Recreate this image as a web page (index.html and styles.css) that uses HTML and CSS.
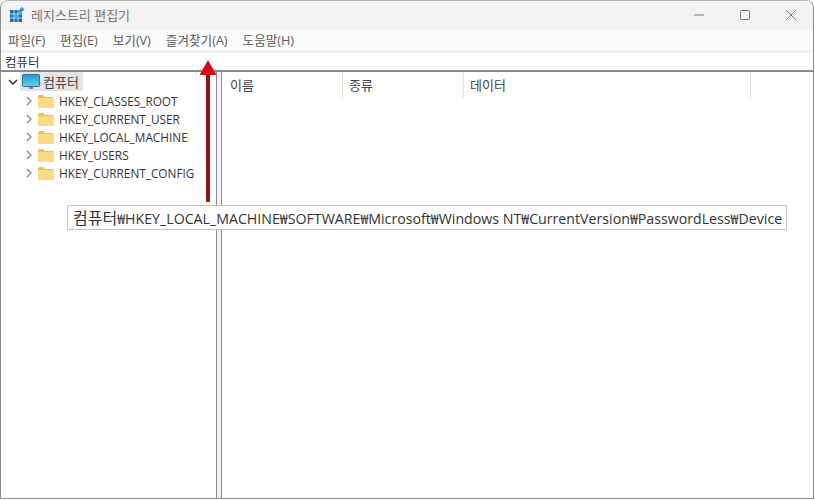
FILE: index.html
```html
<!DOCTYPE html>
<html lang="ko">
<head>
<meta charset="utf-8">
<title>레지스트리 편집기</title>
<link rel="stylesheet" href="styles.css">
</head>
<body>
<div class="window">
  <header class="titlebar">
    <svg class="appicon" width="16" height="16" viewBox="0 0 16 16">
      <rect x="1" y="3" width="12" height="12" fill="#0f6cb8"/>
      <path d="M5 3v12M9 3v12M1 7h12M1 11h12" stroke="#bfe3f6" stroke-width="1"/>
      <rect x="6" y="8" width="3" height="3" fill="#35b4ea"/>
      <rect x="10" y="4" width="3" height="3" fill="#35b4ea"/>
      <path d="M13 0l2.500 2.500L13 5l-2.500-2.500z" fill="#4a90b8"/>
    </svg>
    <span class="title">레지스트리 편집기</span>
    <div class="controls">
      <svg class="ctl" width="12" height="12" viewBox="0 0 12 12"><path d="M1 6h10" stroke="#777"/></svg>
      <svg class="ctl" width="12" height="12" viewBox="0 0 12 12"><rect x="1.500" y="1.500" width="9" height="9" rx="1" fill="none" stroke="#777"/></svg>
      <svg class="ctl" width="12" height="12" viewBox="0 0 12 12"><path d="M1 1l10 10M11 1L1 11" stroke="#777"/></svg>
    </div>
  </header>
  <nav class="menubar">
    <span>파일(F)</span><span>편집(E)</span><span>보기(V)</span><span>즐겨찾기(A)</span><span>도움말(H)</span>
  </nav>
  <div class="address">컴퓨터</div>
  <main class="panes">
    <section class="tree">
      <div class="node root">
        <svg class="chev" width="12" height="12" viewBox="0 0 12 12"><path d="M2 4l4 4 4-4" fill="none" stroke="#333" stroke-width="1.500"/></svg>
        <div class="rootsel">
          <svg class="pc" width="18" height="16" viewBox="0 0 18 16">
            <defs><linearGradient id="scr" x1="0" y1="0" x2="0" y2="1"><stop offset="0" stop-color="#1f9ed6"/><stop offset="1" stop-color="#5fd0ee"/></linearGradient></defs>
            <rect x="0.500" y="0.500" width="17" height="12" rx="1" fill="url(#scr)" stroke="#33708c"/>
            <path d="M7 14h4" stroke="#7a8c96" stroke-width="2"/>
          </svg>
          <span class="rootlabel">컴퓨터</span>
        </div>
      </div>
      <div class="node">
        <svg class="chev" width="10" height="12" viewBox="0 0 10 12"><path d="M3 2l4 4-4 4" fill="none" stroke="#888" stroke-width="1.300"/></svg>
        <svg class="folder" width="16" height="13" viewBox="0 0 16 13"><path d="M0 1.500Q0 0 1.500 0h4L7 2h7.500Q16 2 16 3.500V13H0z" fill="#f2c14e"/><rect y="3" width="16" height="10" fill="#fbdc84"/></svg>
        <span>HKEY_CLASSES_ROOT</span>
      </div>
      <div class="node">
        <svg class="chev" width="10" height="12" viewBox="0 0 10 12"><path d="M3 2l4 4-4 4" fill="none" stroke="#888" stroke-width="1.300"/></svg>
        <svg class="folder" width="16" height="13" viewBox="0 0 16 13"><path d="M0 1.500Q0 0 1.500 0h4L7 2h7.500Q16 2 16 3.500V13H0z" fill="#f2c14e"/><rect y="3" width="16" height="10" fill="#fbdc84"/></svg>
        <span>HKEY_CURRENT_USER</span>
      </div>
      <div class="node">
        <svg class="chev" width="10" height="12" viewBox="0 0 10 12"><path d="M3 2l4 4-4 4" fill="none" stroke="#888" stroke-width="1.300"/></svg>
        <svg class="folder" width="16" height="13" viewBox="0 0 16 13"><path d="M0 1.500Q0 0 1.500 0h4L7 2h7.500Q16 2 16 3.500V13H0z" fill="#f2c14e"/><rect y="3" width="16" height="10" fill="#fbdc84"/></svg>
        <span>HKEY_LOCAL_MACHINE</span>
      </div>
      <div class="node">
        <svg class="chev" width="10" height="12" viewBox="0 0 10 12"><path d="M3 2l4 4-4 4" fill="none" stroke="#888" stroke-width="1.300"/></svg>
        <svg class="folder" width="16" height="13" viewBox="0 0 16 13"><path d="M0 1.500Q0 0 1.500 0h4L7 2h7.500Q16 2 16 3.500V13H0z" fill="#f2c14e"/><rect y="3" width="16" height="10" fill="#fbdc84"/></svg>
        <span>HKEY_USERS</span>
      </div>
      <div class="node">
        <svg class="chev" width="10" height="12" viewBox="0 0 10 12"><path d="M3 2l4 4-4 4" fill="none" stroke="#888" stroke-width="1.300"/></svg>
        <svg class="folder" width="16" height="13" viewBox="0 0 16 13"><path d="M0 1.500Q0 0 1.500 0h4L7 2h7.500Q16 2 16 3.500V13H0z" fill="#f2c14e"/><rect y="3" width="16" height="10" fill="#fbdc84"/></svg>
        <span>HKEY_CURRENT_CONFIG</span>
      </div>
    </section>
    <div class="splitter"></div>
    <section class="list">
      <div class="head">
        <div class="col c1">이름</div>
        <div class="col c2">종류</div>
        <div class="col c3">데이터</div>
      </div>
    </section>
  </main>
</div>
<svg class="arrow" width="22" height="142" viewBox="0 0 22 142">
  <path d="M9 14h4v127a2 2 0 0 1-4 0z" fill="#8c1414"/>
  <path d="M11 0l8.500 15h-17z" fill="#d80c12"/>
</svg>
<div class="tooltip"><span class="ko">컴퓨터</span>₩HKEY_LOCAL_MACHINE₩SOFTWARE₩Microsoft₩Windows NT₩CurrentVersion₩PasswordLess₩Device</div>
</body>
</html>
```
FILE: styles.css
```css
* { box-sizing: border-box; }
html, body { margin: 0; height: 100%; overflow: hidden; background: #fff; }
body {
  width: 815px;
  height: 500px;
  position: relative;
  font-family: "Open Sans", "Noto Sans CJK KR", sans-serif;
  font-size: 12px;
  color: #222;
}
.window {
  width: 814px;
  height: 499px;
  display: flex;
  flex-direction: column;
  border: 1px solid #8e8e8e;
  border-top-color: #b5b5b5;
  border-radius: 8px 8px 0 0;
  overflow: hidden;
}
.titlebar {
  height: 29px;
  flex: none;
  display: flex;
  align-items: center;
  background: #f3f3f3;
  padding: 0 0 2px 8px;
}
.appicon { flex: none; }
.title { margin-left: 6px; color: #777; font-size: 13px; }
.controls { margin-left: auto; display: flex; gap: 34px; padding-right: 16px; }
.ctl { flex: none; }
.menubar {
  height: 20px;
  flex: none;
  display: flex;
  align-items: center;
  gap: 15px;
  padding: 0 0 2px 7px;
  background: #fbfbfb;
  color: #5c5c5c;
  font-size: 12.600px;
}
.address {
  height: 22px;
  flex: none;
  display: flex;
  align-items: center;
  padding-left: 4px;
  background: #fff;
  border-top: 3px solid #f1f1f1;
  border-bottom: 2px solid #8c8c8c;
  font-size: 12.500px;
  color: #333;
}
.panes { flex: 1; display: flex; min-height: 0; }
.tree { width: 215px; flex: none; }
.node {
  height: 18px;
  display: flex;
  align-items: center;
  padding-left: 23px;
  font-size: 11.800px;
  line-height: 18px;
  color: #333;
  white-space: nowrap;
}
.node .chev { flex: none; }
.node .folder { flex: none; margin: 0 5px 0 4px; }
.root { padding-left: 6px; height: 19px; margin-bottom: 1px; }
.rootsel {
  display: flex;
  align-items: center;
  width: 63px;
  height: 19px;
  margin-left: 1px;
  padding-left: 2px;
  background: #e4e4e4;
}
.pc { flex: none; }
.rootlabel { margin-left: 3px; font-size: 13px; color: #444; }
.splitter {
  width: 6px;
  flex: none;
  background: #f2f2f2;
  border-left: 1px solid #8c8c8c;
  border-right: 1px solid #8c8c8c;
}
.list { flex: 1; min-width: 0; }
.head { height: 26px; display: flex; }
.col {
  height: 26px;
  border-right: 1px solid #e2e2e2;
  padding: 3px 0 0 8px;
  font-size: 13px;
  color: #444;
}
.c1 { width: 121px; }
.c2 { width: 121px; padding-left: 6px; }
.c3 { width: 287px; padding-left: 6px; }
.arrow { position: absolute; left: 197px; top: 60px; }
.tooltip {
  position: absolute;
  left: 67px;
  top: 205px;
  width: 720px;
  height: 25px;
  padding-left: 5px;
  border: 1px solid #c4c4c4;
  background: #fff;
  line-height: 24px;
  font-size: 14.200px;
  color: #333;
  white-space: nowrap;
}
.ko { font-size: 16px; }
```
